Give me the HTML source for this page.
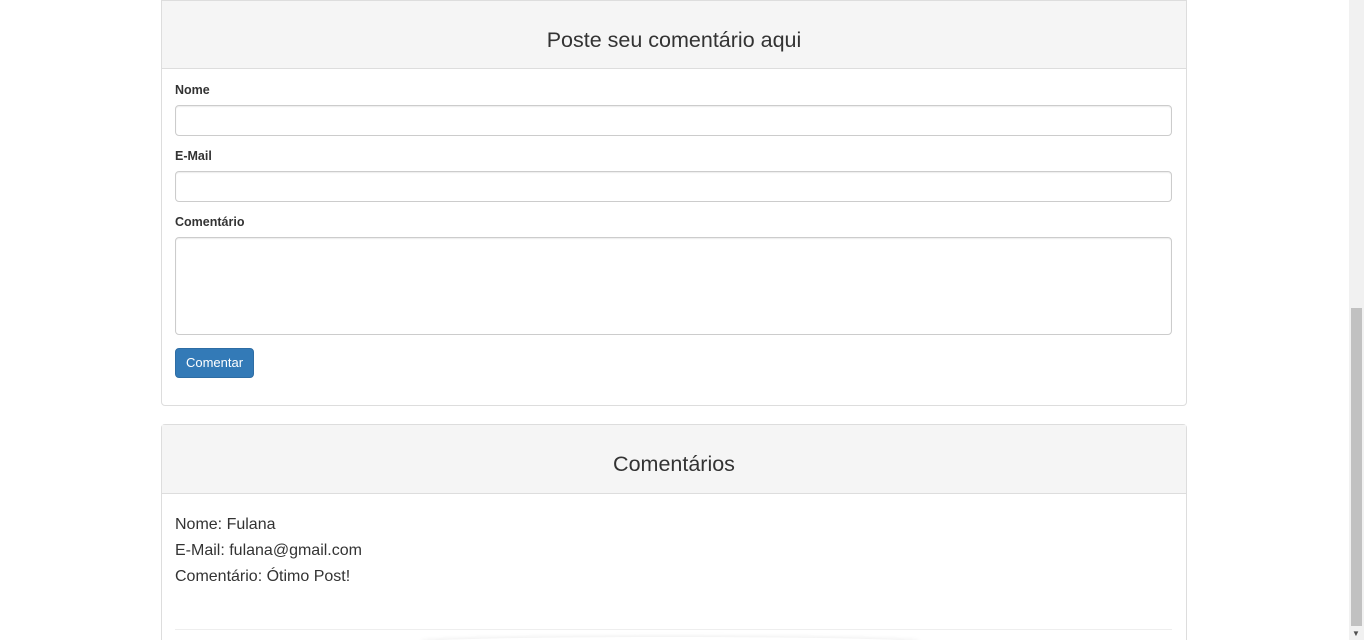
<!DOCTYPE html>
<html><head><meta charset="utf-8"><style>
*{box-sizing:border-box}
html{overflow:hidden;height:640px}
body{margin:0;width:1364px;height:640px;overflow:hidden;background:#fff;font-family:"Liberation Sans",sans-serif;color:#333;position:relative}
.panel{position:absolute;left:161px;width:1026px;border:1px solid #ddd;border-radius:4px;background:#fff}
.head{background:#f5f5f5;border-bottom:1px solid #ddd;text-align:center;font-size:21.5px;color:#333}
label{position:absolute;left:13px;font-size:12.5px;font-weight:bold}
.inp{position:absolute;left:13px;width:997px;border:1px solid #ccc;border-radius:4px;background:#fff;box-shadow:inset 0 1px 1px rgba(0,0,0,.075)}
.btn{position:absolute;left:13px;width:79px;height:30px;background:#337ab7;border:1px solid #2e6da4;border-radius:4px;color:#fff;font-size:13px;text-align:center;line-height:27px}
.sb{position:absolute;right:0;top:0;width:15px;height:640px;background:#f1f1f1}
.thumb{position:absolute;right:2px;top:308px;width:11px;height:318px;background:#c1c1c1}
p{margin:0;font-size:16px;line-height:26px}
</style></head><body>
<div class="panel" style="top:0;height:406px;border-top-left-radius:0;border-top-right-radius:0">
 <div class="head" style="height:68px;line-height:78px">Poste seu comentário aqui</div>
 <label style="top:82px">Nome</label>
 <div class="inp" style="top:104px;height:31px"></div>
 <label style="top:148px">E-Mail</label>
 <div class="inp" style="top:170px;height:31px"></div>
 <label style="top:214px">Comentário</label>
 <div class="inp" style="top:236px;height:98px"></div>
 <div class="btn" style="top:347px">Comentar</div>
</div>
<div class="panel" style="top:424px;height:216px;border-bottom:none;border-bottom-left-radius:0;border-bottom-right-radius:0">
 <div class="head" style="height:69px;line-height:78px">Comentários</div>
 <div style="position:absolute;left:13px;top:87px">
  <p>Nome: Fulana</p><p>E-Mail: fulana@gmail.com</p><p>Comentário: Ótimo Post!</p>
 </div>
 <div style="position:absolute;left:13px;right:14px;top:204px;border-top:1px solid #eee"></div>
</div>
<div style="position:absolute;left:420px;top:637px;width:500px;height:10px;border-radius:50%;box-shadow:0 -1px 4px rgba(0,0,0,.07)"></div>
<div class="sb"><div class="thumb"></div><div style="position:absolute;left:3px;bottom:2px;font-size:8px;color:#505050">▼</div></div>
</body></html>
